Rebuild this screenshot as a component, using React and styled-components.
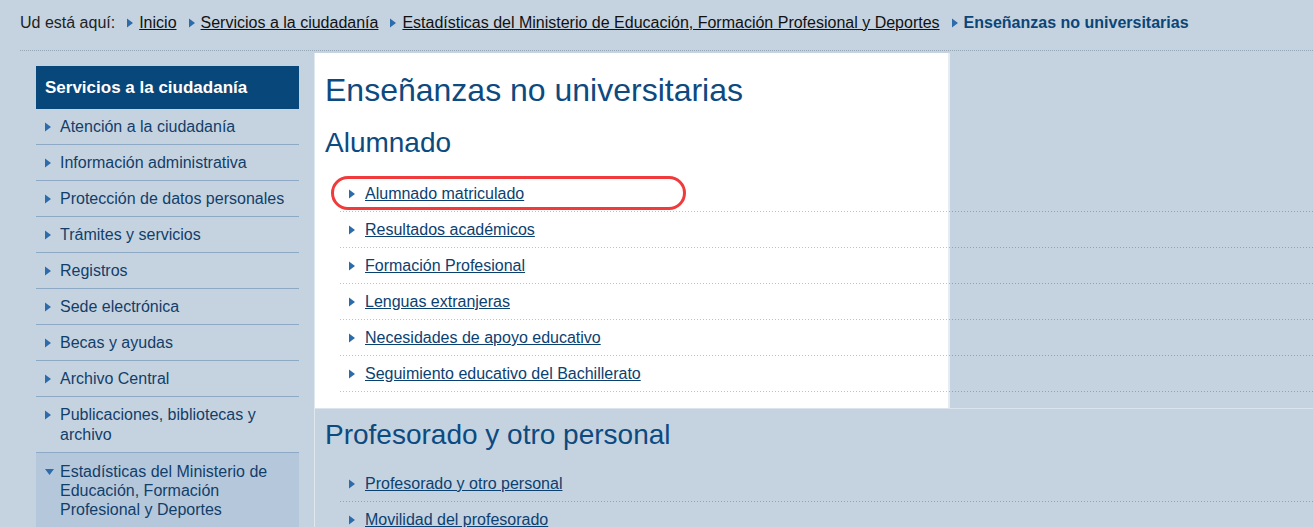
import React from "react";
import styled, { createGlobalStyle } from "styled-components";

const GlobalStyle = createGlobalStyle`
  html, body { margin: 0; padding: 0; background: #c5d3e0; }
  body { font-family: "Liberation Sans", Arial, sans-serif; overflow: hidden; }
  * { box-sizing: border-box; }
`;

const Page = styled.div`
  width: 100%;
  min-height: 527px;
  background: #c5d3e0;
`;

const Breadcrumb = styled.nav`
  margin-left: 20px;
  height: 51px;
  padding-bottom: 5px;
  display: flex;
  align-items: center;
  gap: 12px;
  font-size: 16px;
  line-height: 20px;
  color: #222;
  border-bottom: 1px dotted #97a6b5;
`;

const Crumb = styled.span`
  display: inline-flex;
  align-items: center;
  gap: 7px;
  white-space: nowrap;
`;

const CrumbLink = styled.a`
  color: #111;
  text-decoration: underline;
  cursor: pointer;
`;

const CrumbCurrent = styled.strong`
  color: #0b4677;
  font-weight: bold;
`;

const Main = styled.div`
  display: flex;
  align-items: flex-start;
  margin-top: 2px;
`;

const Sidebar = styled.aside`
  flex: none;
  width: 263px;
  margin: 13px 15px 0 36px;
`;

const SideHeader = styled.div`
  height: 43px;
  background: #07477a;
  color: #fff;
  font-weight: bold;
  font-size: 17px;
  display: flex;
  align-items: center;
  padding-left: 9px;
`;

const SideList = styled.ul`
  list-style: none;
  margin: 0;
  padding: 0;
`;

const SideItem = styled.li`
  display: flex;
  align-items: flex-start;
  gap: ${(p) => (p.$active ? "6px" : "10px")};
  padding: ${(p) => (p.$active ? "9px 10px 10px 9px" : "8px 10px 7px 9px")};
  font-size: 16px;
  line-height: ${(p) => (p.$active ? "19px" : "20px")};
  color: #123e6a;
  background: ${(p) => (p.$active ? "#b5c8db" : "transparent")};
  border-bottom: ${(p) => (p.$active ? "none" : "1px solid #8ea9c5")};
`;

const ArrowBox = styled.span`
  flex: none;
  display: inline-flex;
  align-items: center;
  justify-content: center;
  width: ${(p) => p.$w}px;
  height: ${(p) => p.$h}px;
`;

const Arrow = ({ down, h = 20 }) => (
  <ArrowBox $w={down ? 9 : 5} $h={h}>
    {down ? (
      <svg width="9" height="6" viewBox="0 0 9 6">
        <polygon points="0,0 9,0 4.5,6" fill="#2c6cab" />
      </svg>
    ) : (
      <svg width="6" height="10" viewBox="0 0 6 10" style={{ marginRight: -1 }}>
        <polygon points="0,0.5 6,5 0,9.5" fill="#2c6cab" />
      </svg>
    )}
  </ArrowBox>
);

const Content = styled.main`
  flex: 1;
  min-width: 0;
  border-left: 1px solid #dfe7ef;
`;

const Section = styled.section`
  padding: ${(p) => (p.$white ? "18px 0 16px 10px" : "9px 0 0 10px")};
  background: ${(p) =>
    p.$white
      ? "linear-gradient(90deg, #fff 0, #fff 633px, #e6ecf1 633px, #e6ecf1 635px, transparent 635px)"
      : "transparent"};
  border-bottom: ${(p) => (p.$white ? "1px solid #dbe4ec" : "none")};
`;

const Title = styled.h1`
  margin: 0;
  font-size: 32px;
  line-height: 38px;
  font-weight: normal;
  color: #0c4a80;
`;

const SubTitle = styled.h2`
  margin: ${(p) => (p.$first ? "17px" : "0")} 0 0;
  font-size: 28px;
  line-height: 34px;
  font-weight: normal;
  color: #0c4a80;
`;

const LinkList = styled.ul`
  list-style: none;
  margin: ${(p) => p.$top}px 0 0 15px;
  padding: 0;
`;

const LinkItem = styled.li`
  position: relative;
  display: flex;
  align-items: flex-start;
  gap: 11px;
  padding: 8px 0 8px 9px;
  font-size: 16px;
  line-height: 20px;
  background-image: linear-gradient(90deg, rgba(60, 60, 60, 0.32) 1px, transparent 1px);
  background-size: 3px 1px;
  background-repeat: repeat-x;
  background-position: left bottom;
`;

const ItemLink = styled.a`
  color: #0b4170;
  text-decoration: underline;
  cursor: pointer;
`;

const Highlight = styled.span`
  position: absolute;
  left: -9px;
  top: 0;
  width: 355px;
  height: 34px;
  border: 3px solid #f03a3c;
  border-radius: 17px;
  pointer-events: none;
`;

const sideItems = [
  "Atención a la ciudadanía",
  "Información administrativa",
  "Protección de datos personales",
  "Trámites y servicios",
  "Registros",
  "Sede electrónica",
  "Becas y ayudas",
  "Archivo Central",
  "Publicaciones, bibliotecas y archivo",
];

const alumnado = [
  "Alumnado matriculado",
  "Resultados académicos",
  "Formación Profesional",
  "Lenguas extranjeras",
  "Necesidades de apoyo educativo",
  "Seguimiento educativo del Bachillerato",
];

const profesorado = ["Profesorado y otro personal", "Movilidad del profesorado"];

export default function App() {
  return (
    <Page>
      <GlobalStyle />
      <Breadcrumb>
        <span>Ud está aquí:</span>
        <Crumb>
          <Arrow />
          <CrumbLink>Inicio</CrumbLink>
        </Crumb>
        <Crumb>
          <Arrow />
          <CrumbLink>Servicios a la ciudadanía</CrumbLink>
        </Crumb>
        <Crumb>
          <Arrow />
          <CrumbLink>Estadísticas del Ministerio de Educación, Formación Profesional y Deportes</CrumbLink>
        </Crumb>
        <Crumb>
          <Arrow />
          <CrumbCurrent>Enseñanzas no universitarias</CrumbCurrent>
        </Crumb>
      </Breadcrumb>
      <Main>
        <Sidebar>
          <SideHeader>Servicios a la ciudadanía</SideHeader>
          <SideList>
            {sideItems.map((t) => (
              <SideItem key={t}>
                <Arrow />
                <span>{t}</span>
              </SideItem>
            ))}
            <SideItem $active>
              <Arrow down h={19} />
              <span>Estadísticas del Ministerio de Educación, Formación Profesional y Deportes</span>
            </SideItem>
          </SideList>
        </Sidebar>
        <Content>
          <Section $white>
            <Title>Enseñanzas no universitarias</Title>
            <SubTitle $first>Alumnado</SubTitle>
            <LinkList $top={16}>
              {alumnado.map((t, i) => (
                <LinkItem key={t}>
                  {i === 0 && <Highlight />}
                  <Arrow />
                  <ItemLink>{t}</ItemLink>
                </LinkItem>
              ))}
            </LinkList>
          </Section>
          <Section>
            <SubTitle>Profesorado y otro personal</SubTitle>
            <LinkList $top={14}>
              {profesorado.map((t) => (
                <LinkItem key={t}>
                  <Arrow />
                  <ItemLink>{t}</ItemLink>
                </LinkItem>
              ))}
            </LinkList>
          </Section>
        </Content>
      </Main>
    </Page>
  );
}
